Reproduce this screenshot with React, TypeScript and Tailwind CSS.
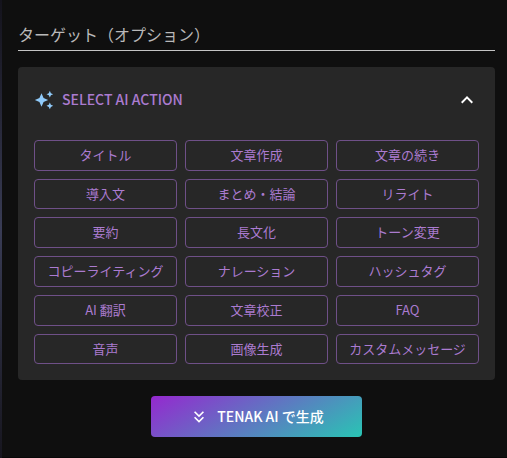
import React from "react";
import {
  MdAutoAwesome,
  MdExpandMore,
  MdKeyboardDoubleArrowDown,
} from "react-icons/md";

const actions = [
  "タイトル",
  "文章作成",
  "文章の続き",
  "導入文",
  "まとめ・結論",
  "リライト",
  "要約",
  "長文化",
  "トーン変更",
  "コピーライティング",
  "ナレーション",
  "ハッシュタグ",
  "AI 翻訳",
  "文章校正",
  "FAQ",
  "音声",
  "画像生成",
  "カスタムメッセージ",
];

const App = () => {
  return (
    <div className="flex h-[458px] w-[507px] overflow-hidden bg-[#0f0f0f] font-['Noto_Sans_CJK_JP',sans-serif] antialiased">
      {/* Page edge behind the panel */}
      <div className="w-0.5 shrink-0 bg-gradient-to-b from-[#14131c] via-[#393c55] to-[#17161f]" />

      <main className="flex min-w-0 flex-1 flex-col border-b border-[#080808] pr-3 pl-4">
        {/* Target field */}
        <div className="flex h-[51px] items-end border-b border-[#c4c4c4] pb-1 text-base leading-6 text-[#b9b9b9]">
          ターゲット（オプション）
        </div>

        {/* AI actions */}
        <section className="mt-4 h-[313px] rounded bg-[#272727] px-4">
          <div className="flex h-[65px] items-center">
            <MdAutoAwesome className="size-5 text-[#90caf9]" />
            <h2 className="ml-2 pb-0.5 text-sm font-medium text-[#ab7bd0]">
              SELECT AI ACTION
            </h2>
            <MdExpandMore className="ml-auto size-6 rotate-180 text-white" />
          </div>

          <div className="mt-[7.75px] grid grid-cols-3 gap-2">
            {actions.map((action) => (
              <button
                key={action}
                className="flex h-[30.75px] justify-center rounded border border-[#6f5088] pt-[3px] text-[13px] leading-[22.75px] text-[#ab7bd0]"
              >
                {action}
              </button>
            ))}
          </div>
        </section>

        <button className="mt-4 flex h-[41px] w-[211px] items-center justify-center gap-2 self-center rounded bg-[linear-gradient(150deg,#9528cf,#29c5b4)] text-sm font-medium text-white">
          <MdKeyboardDoubleArrowDown className="size-5" />
          <span className="pb-0.5">TENAK AI で生成</span>
        </button>
      </main>
    </div>
  );
};

export default App;
